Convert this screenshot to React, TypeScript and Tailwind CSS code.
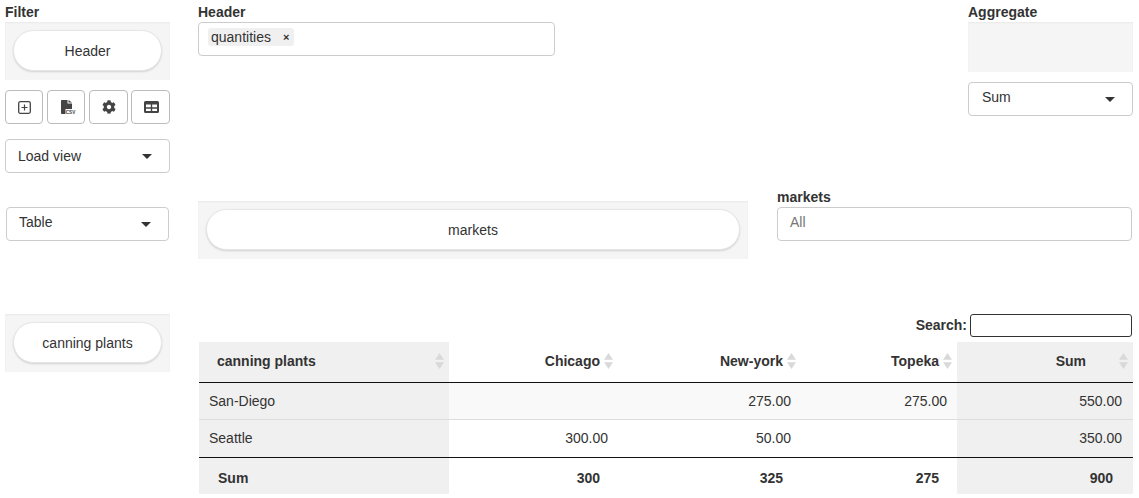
import React from 'react';
import { FaCog } from 'react-icons/fa';

const Pill: React.FC<{ label: string; className?: string }> = ({ label, className }) => (
  <div className={`flex h-[58px] items-start bg-[#f5f5f5] px-2 pt-[8px] shadow-[inset_0_1px_2px_rgba(0,0,0,0.05)] ${className ?? ''}`}>
    <div className="flex h-[41px] w-full items-center justify-center rounded-[21px] border border-[#e6e6e6] bg-white pt-[2px] text-[14px] text-[#333] shadow-[0_1px_2px_rgba(0,0,0,0.15)]">
      {label}
    </div>
  </div>
);

const Select: React.FC<{ label: string; className?: string; top?: boolean }> = ({ label, className, top }) => (
  <div className={`flex h-[34px] items-center justify-between rounded border border-[#ccc] bg-white pr-[17px] text-[14px] text-[#333] ${className ?? ''}`}>
    <span className={top ? '-mt-[4px]' : ''}>{label}</span>
    <span className="h-0 w-0 border-x-[5px] border-t-[5px] border-x-transparent border-t-[#333]" />
  </div>
);

const IconButton: React.FC<{ children: React.ReactNode; className: string }> = ({ children, className }) => (
  <button className={`flex h-[34px] items-center justify-center rounded border border-[#bbb] bg-white text-[#444] ${className}`}>
    {children}
  </button>
);

const PlusIcon: React.FC = () => (
  <svg viewBox="0 0 13 13" className="h-[13px] w-[13px]" fill="none" stroke="#444">
    <rect x="0.700" y="0.700" width="11.600" height="11.600" rx="1.500" strokeWidth="1.300" />
    <path d="M6.500 3.500v6M3.500 6.500h6" strokeWidth="1.200" />
  </svg>
);

const CsvIcon: React.FC = () => (
  <svg viewBox="0 0 15 14" className="ml-[4px] h-[14px] w-[15px]">
    <path d="M0 0.800Q0 0 0.800 0H6.500V3.500H11V9H4.500V14H0.800Q0 14 0 13.200Z" fill="#444" />
    <path d="M7.500 0 11 2.600H7.500z" fill="#444" />
    <text x="4.800" y="13.600" fontSize="4.600" fontWeight="bold" fontFamily="Liberation Sans, sans-serif" fill="#444">CSV</text>
  </svg>
);

const GridIcon: React.FC = () => (
  <svg viewBox="0 0 15 12" className="ml-[1px] h-[12px] w-[15px]">
    <path
      fillRule="evenodd"
      d="M1.500 0h12Q15 0 15 1.500v9Q15 12 13.500 12h-12Q0 12 0 10.500v-9Q0 0 1.500 0ZM2 3.500V6.300H6.800V3.500ZM8.200 3.500V6.300H13V3.500ZM2 7.700V10H6.800V7.700ZM8.200 7.700V10H13V7.700Z"
      fill="#444"
    />
  </svg>
);

const SortArrows: React.FC = () => (
  <svg viewBox="0 0 9 16" className="absolute right-[5px] top-[11px] h-[16px] w-[9px]" fill="#d9d9d9">
    <path d="M4.500 0 9 6.800H0z" />
    <path d="M0 9.200h9L4.500 16z" />
  </svg>
);

const rows = [
  { name: 'San-Diego', chicago: '', newYork: '275.00', topeka: '275.00', sum: '550.00', bg: 'bg-[#f9f9f9]', h: 'h-[37px]' },
  { name: 'Seattle', chicago: '300.00', newYork: '50.00', topeka: '', sum: '350.00', bg: 'bg-white', h: 'h-[38px]' },
];

export default function App() {
  return (
    <div className="h-[498px] w-[1139px] overflow-hidden bg-white font-['Liberation_Sans',Arial,sans-serif] text-[14px] text-[#333]">
      {/* top row */}
      <div className="flex h-[190px] pl-[5px] pt-[5px]">
        <div className="w-[165px]">
          <div className="h-[17px] font-bold leading-[15px]">Filter</div>
          <Pill label="Header" />
          <div className="mt-[10px] flex">
            <IconButton className="w-[38px]"><PlusIcon /></IconButton>
            <IconButton className="ml-[4px] w-[38px]"><CsvIcon /></IconButton>
            <IconButton className="ml-[4px] w-[39px]"><FaCog size={14} className="ml-[1px]" /></IconButton>
            <IconButton className="ml-[3px] w-[39px]"><GridIcon /></IconButton>
          </div>
          <Select label="Load view" className="mt-[15px] pl-[12px]" />
        </div>
        <div className="ml-[28px] w-[357px]">
          <div className="h-[17px] font-bold leading-[15px]">Header</div>
          <div className="flex h-[34px] items-start rounded border border-[#ccc] bg-white pl-[9px] pt-[5px]">
            <span className="flex h-[18px] items-center rounded-[3px] bg-[#f0f0f0] pl-[3px] pr-[5px]">
              quantities
              <span className="ml-[12px] text-[11px] font-bold leading-none">×</span>
            </span>
          </div>
        </div>
        <div className="ml-[413px] w-[165px]">
          <div className="h-[17px] font-bold leading-[15px]">Aggregate</div>
          <div className="h-[50px] bg-[#f5f5f5] shadow-[inset_0_1px_2px_rgba(0,0,0,0.05)]" />
          <Select label="Sum" className="mt-[10px] pl-[13px]" top />
        </div>
      </div>

      {/* middle row */}
      <div className="flex h-[124px] items-start pl-[6px]">
        <Select label="Table" className="mt-[17px] w-[163px] pl-[12px]" top />
        <Pill label="markets" className="ml-[29px] mt-[11px] w-[550px]" />
        <div className="ml-[29px] w-[355px]">
          <div className="h-[17px] font-bold leading-[15px]">markets</div>
          <div className="flex h-[34px] items-center rounded border border-[#ccc] pl-[12px] text-[#777]">
            <span className="-mt-[4px]">All</span>
          </div>
        </div>
      </div>

      {/* bottom row */}
      <div className="flex items-start pl-[5px]">
        <Pill label="canning plants" className="w-[165px]" />
        <div className="ml-[29px] w-[934px]">
          <div className="flex h-[28px] items-start justify-end pr-[1px]">
            <label className="mr-[3px] font-bold leading-[22px]">Search:</label>
            <input className="h-[23px] w-[162px] rounded-[3px] border border-[#333] bg-white" />
          </div>
          <table className="w-full table-fixed border-collapse">
            <colgroup>
              <col className="w-[250px]" />
              <col className="w-[169px]" />
              <col className="w-[183px]" />
              <col className="w-[156px]" />
              <col className="w-[176px]" />
            </colgroup>
            <thead>
              <tr className="h-[40px] border-b border-[#111] font-bold">
                <th className="relative bg-[#f0f0f0] pl-[18px] text-left"><span>canning plants</span><SortArrows /></th>
                <th className="relative pr-[18px] text-right">Chicago<SortArrows /></th>
                <th className="relative pr-[18px] text-right">New-york<SortArrows /></th>
                <th className="relative pr-[18px] text-right">Topeka<SortArrows /></th>
                <th className="relative bg-[#f0f0f0] pr-[47px] text-right">Sum<SortArrows /></th>
              </tr>
            </thead>
            <tbody>
              {rows.map((r, i) => (
                <tr key={r.name} className={`${r.h} ${i === 0 ? 'border-b border-[#ddd]' : ''} ${r.bg}`}>
                  <td className="bg-[#f0f0f0] pl-[10px] pt-[1px]">{r.name}</td>
                  <td className="pr-[10px] pt-[1px] text-right">{r.chicago}</td>
                  <td className="pr-[10px] pt-[1px] text-right">{r.newYork}</td>
                  <td className="pr-[10px] pt-[1px] text-right">{r.topeka}</td>
                  <td className="bg-[#f0f0f0] pr-[11px] pt-[1px] text-right">{r.sum}</td>
                </tr>
              ))}
            </tbody>
            <tfoot>
              <tr className="h-[37px] border-t border-[#111] font-bold">
                <td className="bg-[#f0f0f0] pl-[19px] pt-[6px]">Sum</td>
                <td className="pr-[18px] pt-[6px] text-right">300</td>
                <td className="pr-[18px] pt-[6px] text-right">325</td>
                <td className="pr-[18px] pt-[6px] text-right">275</td>
                <td className="bg-[#f0f0f0] pr-[20px] pt-[6px] text-right">900</td>
              </tr>
            </tfoot>
          </table>
        </div>
      </div>
    </div>
  );
}
